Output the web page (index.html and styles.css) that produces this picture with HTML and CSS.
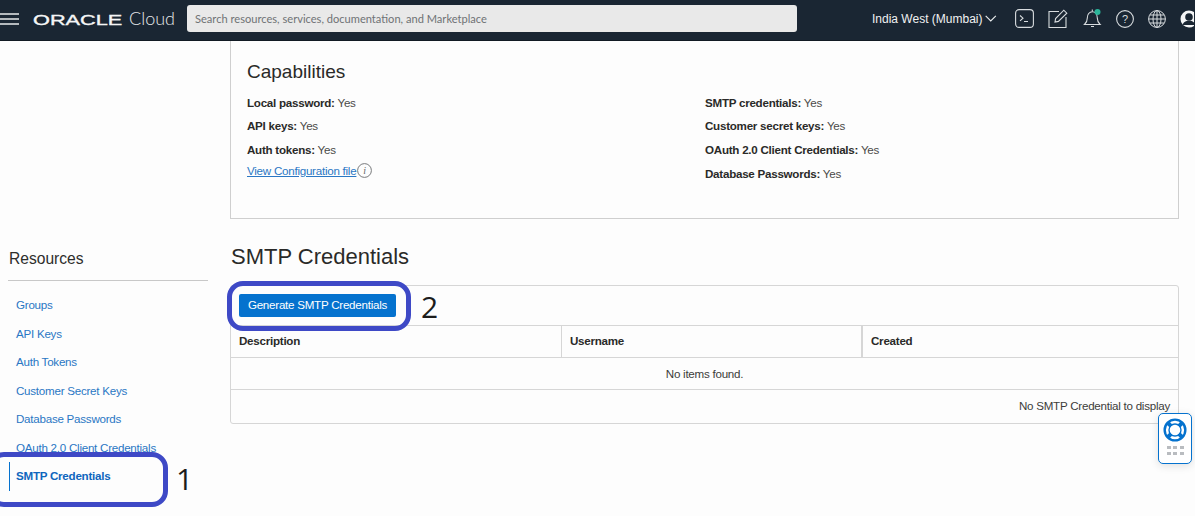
FILE: index.html
```html
<!DOCTYPE html>
<html lang="en">
<head>
<meta charset="utf-8">
<title>SMTP Credentials</title>
<link rel="stylesheet" href="styles.css">
</head>
<body>
<header class="topbar">
  <svg class="menu-icon" width="19" height="12" viewBox="0 0 19 12"><path d="M0 1h19M0 6h19M0 11h19" stroke="#e8eaec" stroke-width="1.4"/></svg>
  <div class="brand"><span class="oracle">ORACLE</span><span class="cloud">Cloud</span></div>
  <div class="search">Search resources, services, documentation, and Marketplace</div>
  <div class="region"><span>India West (Mumbai)</span>
    <svg width="12" height="7" viewBox="0 0 12 7"><path d="M.7.7 6 6l5.300-5.300" fill="none" stroke="#e8eaec" stroke-width="1.2"/></svg>
  </div>
  <div class="tools">
    <svg width="19" height="19" viewBox="0 0 19 19" fill="none" stroke="#d8dcdf" stroke-width="1.1"><rect x=".6" y=".6" width="17.8" height="17.8" rx="3.5"/><path d="m5 6.500 3 2.700-3 2.700M9 12.500h4"/></svg>
    <svg class="edit" width="20" height="19" viewBox="0 0 20 19" fill="none" stroke="#d8dcdf" stroke-width="1.1"><path d="M11 2.500H1v16h17V8"/><path d="m7 13 .6-3.400L15.800 1.200l3 3-8.400 8.200z"/></svg>
    <svg width="19" height="21" viewBox="0 0 19 21" fill="none" stroke="#d8dcdf" stroke-width="1.1"><path d="M1.500 16.500c2.200-2 2.800-3.500 2.800-6.500 0-3.500 2-6.300 5-6.300s5 2.800 5 6.300c0 3 .6 4.500 2.800 6.500z"/><path d="M8 18.500h3M9.300 3.500V1.500"/><circle cx="14.500" cy="4" r="3" fill="#2bb59a" stroke="none"/></svg>
    <svg width="18" height="18" viewBox="0 0 18 18" fill="none" stroke="#d8dcdf" stroke-width="1.1"><circle cx="9" cy="9" r="8.400"/><text x="9" y="13" class="help-q" text-anchor="middle">?</text></svg>
    <svg width="18" height="18" viewBox="0 0 18 18" fill="none" stroke="#d8dcdf" stroke-width="1"><circle cx="9" cy="9" r="8.400"/><ellipse cx="9" cy="9" rx="4" ry="8.400"/><path d="M9 .6v16.800M.6 9h16.800M1.800 5h14.400M1.800 13h14.400"/></svg>
    <svg class="avatar" width="14" height="18" viewBox="0 0 14 18"><circle cx="9" cy="9" r="8.500" fill="#f4f5f6"/><circle cx="9" cy="7" r="3.800" fill="#1a2633"/><path d="M2.500 15c1-3.300 3.500-4.300 6.500-4.300s5.500 1 6.500 4.300z" fill="#1a2633"/></svg>
  </div>
</header>

<div class="page">
  <aside class="sidebar">
    <h2 class="side-title">Resources</h2>
    <nav class="side-nav">
      <a href="#">Groups</a>
      <a href="#">API Keys</a>
      <a href="#">Auth Tokens</a>
      <a href="#">Customer Secret Keys</a>
      <a href="#">Database Passwords</a>
      <a href="#">OAuth 2.0 Client Credentials</a>
      <a href="#" class="active">SMTP Credentials</a>
    </nav>
  </aside>

  <main class="content">
    <section class="caps">
      <h3 class="caps-title">Capabilities</h3>
      <div class="caps-grid">
        <div class="caps-col">
          <p><b>Local password:</b> Yes</p>
          <p><b>API keys:</b> Yes</p>
          <p><b>Auth tokens:</b> Yes</p>
          <p class="config"><a href="#">View Configuration file</a><svg width="15" height="15" viewBox="0 0 15 15"><circle cx="7.500" cy="7.500" r="6.900" fill="none" stroke="#77797b" stroke-width="1"/><text x="7.500" y="11" class="info-i" text-anchor="middle">i</text></svg></p>
        </div>
        <div class="caps-col">
          <p><b>SMTP credentials:</b> Yes</p>
          <p><b>Customer secret keys:</b> Yes</p>
          <p><b>OAuth 2.0 Client Credentials:</b> Yes</p>
          <p><b>Database Passwords:</b> Yes</p>
        </div>
      </div>
    </section>

    <h1 class="section-title">SMTP Credentials</h1>
    <section class="table-card">
      <div class="toolbar"><button class="primary">Generate SMTP Credentials</button></div>
      <div class="row head">
        <div class="c1">Description</div>
        <div class="c2">Username</div>
        <div class="c3">Created</div>
      </div>
      <div class="row empty">No items found.</div>
      <div class="foot">No SMTP Credential to display</div>
    </section>
  </main>
</div>

<div class="mark mark-1"></div>
<div class="mark mark-2"></div>
<span class="num num-1">1</span>
<span class="num num-2">2</span>

<div class="help-widget">
  <svg width="24" height="24" viewBox="0 0 26 26" fill="none"><circle cx="13" cy="13" r="11.200" stroke="#0572ce" stroke-width="2.600"/><circle cx="13" cy="13" r="6.500" stroke="#0572ce" stroke-width="1.500"/><path d="m4.800 4.800 4 4M21.200 4.800l-4 4M4.800 21.200l4-4M21.200 21.200l-4-4" stroke="#0572ce" stroke-width="4.500"/></svg>
  <div class="dots"><i></i><i></i><i></i><i></i><i></i><i></i></div>
</div>
</body>
</html>
```
FILE: styles.css
```css
* { box-sizing: border-box; }
html, body { margin: 0; padding: 0; }
body {
  width: 1195px;
  height: 516px;
  overflow: hidden;
  position: relative;
  background: #fdfdfd;
  color: #2a2a28;
  font-family: "Liberation Sans", Arial, sans-serif;
  font-size: 11.600px;
  letter-spacing: -.25px;
}
.topbar {
  height: 41px;
  padding-bottom: 3px;
  background: #1a2633;
  display: flex;
  align-items: center;
  color: #f0f1f2;
  border-bottom: 1px solid #121b24;
  letter-spacing: 0;
}
.menu-icon { flex: none; }
.brand { display: flex; align-items: baseline; margin-left: 14px; width: 140px; flex: none; padding-bottom: 2px; }
.oracle {
  font-size: 14px;
  font-weight: 400;
  transform: scaleX(1.55);
  transform-origin: left;
  width: 96px;
  flex: none;
  color: #f4f5f6;
  -webkit-text-stroke: .35px #f4f5f6;
}
.cloud { font-family: "Lato", sans-serif; font-size: 18px; font-weight: 300; color: #e6e8ea; flex: none; }
.search {
  margin-left: 14px;
  width: 610px;
  height: 27px;
  background: #e9e9e9;
  border-radius: 3px;
  line-height: 27px;
  padding-left: 8px;
  color: #6f7275;
  font-family: "Lato", sans-serif;
  font-size: 11.100px;
  flex: none;
}
.region {
  margin-left: 75px;
  display: flex;
  align-items: center;
  gap: 3px;
  font-size: 12px;
  width: 125px;
  white-space: nowrap;
  flex: none;
}
.tools { display: flex; align-items: center; gap: 14px; margin-left: 18px; flex: none; }
.tools .edit { margin-right: 1px; }
.help-q { font-family: "Liberation Sans", sans-serif; font-size: 11px; fill: #d8dcdf; stroke: none; }
.page { display: flex; height: 475px; }
.sidebar { width: 230px; flex: none; padding: 208px 22px 0 8px; }
.side-title {
  margin: 0;
  font-size: 15.600px;
  font-weight: 400;
  letter-spacing: 0;
  line-height: 20px;
  height: 32px;
  padding-left: 1px;
  border-bottom: 1px solid #c8c8c8;
  color: #2e2e2c;
}
.side-nav { display: flex; flex-direction: column; padding-top: 10px; }
.side-nav a {
  height: 28.500px;
  line-height: 28.500px;
  padding-left: 8px;
  color: #2a77c4;
  text-decoration: none;
}
.side-nav a.active {
  color: #0f66bd;
  font-weight: 700;
  margin-left: 1px;
  padding-left: 6px;
  border-left: 1px solid #0572ce;
}
.content { width: 949px; flex: none; }
.caps {
  height: 178px;
  border: 1px solid #cfcfcf;
  border-top: 0;
  padding: 19px 16px 0;
  background: #fdfdfd;
}
.caps-title { margin: 0 0 7.700px; font-size: 19px; font-weight: 400; letter-spacing: 0; line-height: 23px; color: #2a2a28; }
.caps-grid { display: grid; grid-template-columns: 458px 1fr; }
.caps-col p { margin: 0; height: 23.700px; line-height: 23.700px; color: #4a4a48; }
.caps-col b { color: #2a2a28; }
.caps-col p.config { display: flex; align-items: center; margin-top: -3px; }
.config a { color: #2a77c4; }
.config svg { flex: none; margin-left: 1px; }
.info-i { font-family: "Liberation Serif", serif; font-style: italic; font-size: 10px; fill: #666; }
.section-title { margin: 24px 0 15px; font-size: 22px; font-weight: 400; letter-spacing: 0; line-height: 27px; color: #2a2a28; padding-left: 1px; }
.table-card { border: 1px solid #d6d6d6; border-radius: 3px; height: 139px; }
.toolbar { height: 40px; padding: 8px 8px 0; border-bottom: 1px solid #d6d6d6; }
.primary {
  display: block;
  width: 157px;
  height: 23px;
  border: 0;
  border-radius: 2px;
  background: #0572ce;
  color: #fff;
  font: 11.600px "Liberation Sans", Arial, sans-serif;
  letter-spacing: -.25px;
  padding: 0 0 2px;
}
.row { display: flex; }
.head { height: 32px; line-height: 30px; font-weight: 700; border-bottom: 1px solid #d6d6d6; color: #2a2a28; }
.c1 { width: 331px; padding-left: 8px; border-right: 1px solid #d6d6d6; }
.c2 { width: 301px; padding-left: 8px; border-right: 2px solid #d6d6d6; }
.c3 { flex: 1; padding-left: 8px; }
.empty { height: 32px; line-height: 31px; justify-content: center; border-bottom: 1px solid #d6d6d6; color: #3c3c3a; }
.foot { height: 32px; line-height: 31px; text-align: right; padding-right: 8px; color: #3c3c3a; }
.mark { position: absolute; border: 5px solid #3e49c6; border-radius: 16px; }
.mark-1 { left: -12px; top: 452px; width: 180px; height: 55px; }
.mark-2 { left: 227px; top: 281px; width: 184px; height: 50px; }
.num { position: absolute; font-family: "Open Sans", sans-serif; font-size: 30px; letter-spacing: 0; line-height: 36px; color: #1c1c1c; }
.num-1 { left: 176px; top: 461px; }
.num-2 { left: 421px; top: 289px; }
.help-widget {
  position: absolute;
  left: 1158px;
  top: 413px;
  width: 34px;
  height: 51px;
  background: #fff;
  border: 1.500px solid #0572ce;
  border-radius: 5px;
  display: flex;
  flex-direction: column;
  align-items: center;
  padding-top: 4px;
  box-shadow: 0 2px 8px rgba(0,0,0,.12);
}
.dots { display: grid; grid-template-columns: repeat(3, 4px); gap: 3px 2.500px; margin-top: 4px; }
.dots i { display: block; height: 3px; background: #b9bcc0; }
```
